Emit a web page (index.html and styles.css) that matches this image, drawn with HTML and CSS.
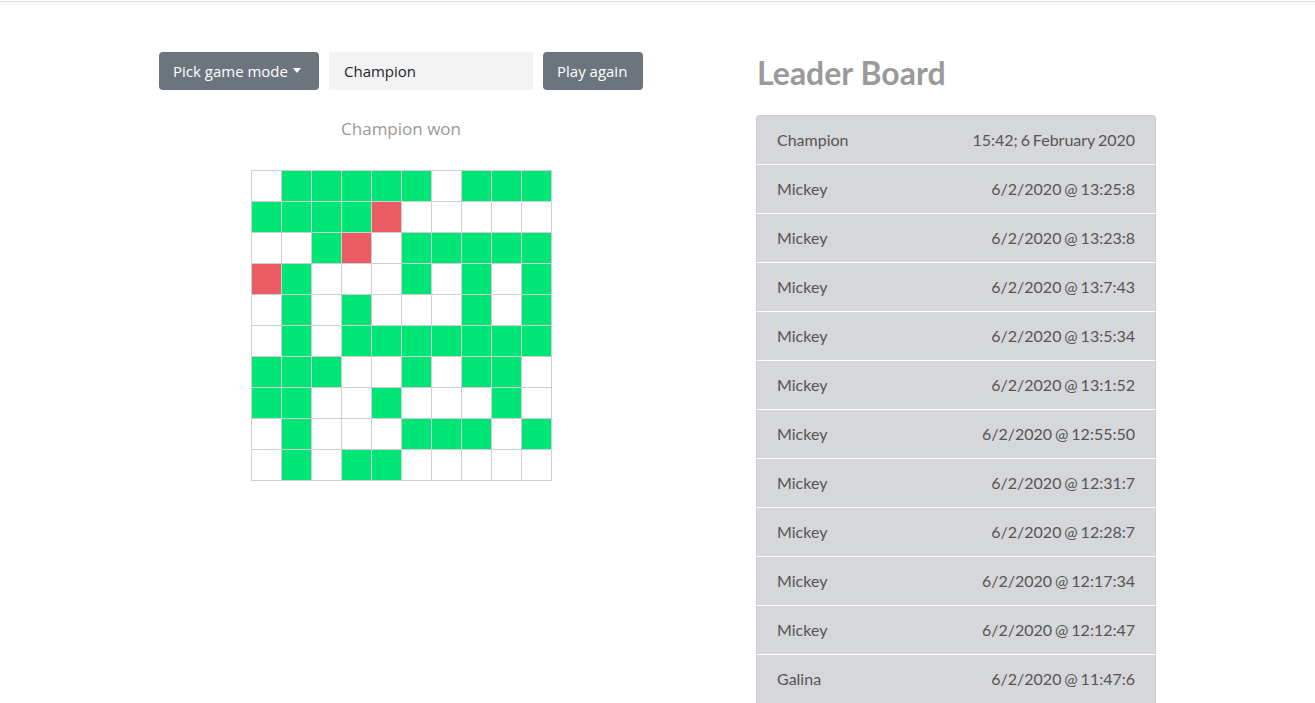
FILE: index.html
```html
<!DOCTYPE html>
<html>
<head>
<meta charset="utf-8">
<link rel="stylesheet" href="styles.css">
</head>
<body>
<div class="topline"></div>
<main class="page">
  <section class="game">
    <div class="controls">
      <button class="btn btn-mode">Pick game mode<span class="caret"></span></button>
      <input class="name-input" type="text" value="Champion">
      <button class="btn btn-play">Play again</button>
    </div>
    <p class="status">Champion won</p>
    <div class="board" id="board"></div>
  </section>
  <section class="leaders">
    <h1 class="title">Leader Board</h1>
    <ul class="list">
      <li class="item"><span>Champion</span><span class="date">15:42; 6 February 2020</span></li>
      <li class="item"><span>Mickey</span><span class="date">6/2/2020 @ 13:25:8</span></li>
      <li class="item"><span>Mickey</span><span class="date">6/2/2020 @ 13:23:8</span></li>
      <li class="item"><span>Mickey</span><span class="date">6/2/2020 @ 13:7:43</span></li>
      <li class="item"><span>Mickey</span><span class="date">6/2/2020 @ 13:5:34</span></li>
      <li class="item"><span>Mickey</span><span class="date">6/2/2020 @ 13:1:52</span></li>
      <li class="item"><span>Mickey</span><span class="date">6/2/2020 @ 12:55:50</span></li>
      <li class="item"><span>Mickey</span><span class="date">6/2/2020 @ 12:31:7</span></li>
      <li class="item"><span>Mickey</span><span class="date">6/2/2020 @ 12:28:7</span></li>
      <li class="item"><span>Mickey</span><span class="date">6/2/2020 @ 12:17:34</span></li>
      <li class="item"><span>Mickey</span><span class="date">6/2/2020 @ 12:12:47</span></li>
      <li class="item"><span>Galina</span><span class="date">6/2/2020 @ 11:47:6</span></li>
    </ul>
  </section>
</main>
<script>
  var rows = [
    "WGGGGGWGGG",
    "GGGGRWWWWW",
    "WWGRWGGGGG",
    "RGWWWGWGWG",
    "WGWGWWWGWG",
    "WGWGGGGGGG",
    "GGGWWGWGGW",
    "GGWWGWWWGW",
    "WGWWWGGGWG",
    "WGWGGWWWWW"
  ];
  var board = document.getElementById("board");
  rows.forEach(function (r) {
    r.split("").forEach(function (c) {
      var d = document.createElement("div");
      d.className = "cell" + (c === "G" ? " green" : c === "R" ? " red" : "");
      board.appendChild(d);
    });
  });
</script>
</body>
</html>
```

FILE: styles.css
```css
html, body {
  margin: 0;
  padding: 0;
  background: #fff;
  overflow: hidden;
}
body {
  font-family: "Open Sans", "Noto Sans", sans-serif;
  color: #212529;
}
.topline {
  margin-top: 1px;
  height: 1px;
  background: #dcdcdc;
  border-bottom: 3px solid #fafafa;
}
.page {
  display: flex;
  align-items: flex-start;
  padding-left: 159px;
  gap: 113px;
}
.game {
  width: 484px;
  display: flex;
  flex-direction: column;
  align-items: center;
  padding-top: 47px;
}
.controls {
  display: flex;
  gap: 10px;
  width: 100%;
}
.btn {
  height: 38px;
  border: none;
  border-radius: 4px;
  background: #6c757d;
  color: #fff;
  font-family: "Open Sans", sans-serif;
  font-size: 15px;
  padding: 0 14px;
  display: flex;
  align-items: center;
}
.btn-mode {
  width: 160px;
}
.caret {
  display: inline-block;
  margin-left: 5px;
  border-top: 5px solid #fff;
  border-left: 4.5px solid transparent;
  border-right: 4.5px solid transparent;
  position: relative;
  top: -1px;
}
.btn-play {
  width: 100px;
}
.name-input {
  width: 204px;
  height: 38px;
  box-sizing: border-box;
  border: none;
  background: #f3f3f3;
  font-family: "Open Sans", sans-serif;
  font-size: 15px;
  color: #212529;
  padding: 0 15px;
  outline: none;
}
.status {
  margin: 27px 0 29px;
  font-size: 17px;
  line-height: 24px;
  color: #999;
}
.board {
  display: grid;
  grid-template-columns: repeat(10, 29px);
  grid-auto-rows: 30px;
  gap: 1px;
  padding: 1px;
  background: #cfcfcf;
}
.cell {
  background: #fff;
}
.cell.green {
  background: #00e676;
}
.cell.red {
  background: #ea5b63;
}
.leaders {
  width: 400px;
  font-family: "Lato", sans-serif;
}
.title {
  margin: 46px 0 0 1px;
  font-size: 32px;
  line-height: 44px;
  font-weight: 700;
  color: #9a9a9a;
}
.list {
  list-style: none;
  margin: 20px 0 0;
  padding: 0;
}
.item {
  display: flex;
  justify-content: space-between;
  box-sizing: border-box;
  padding: 0 20px 1px;
  align-items: center;
  background: #d6d7da;
  border-left: 1px solid #c9c9cb;
  border-right: 1px solid #c9c9cb;
  border-bottom: 1px solid #fff;
  color: #555;
  font-size: 16px;
  height: 49px;
}
.item:first-child {
  height: 50px;
  border-top: 1px solid #c9c9cb;
  border-radius: 4px 4px 0 0;
}
.date {
  word-spacing: -1.2px;
}
```
